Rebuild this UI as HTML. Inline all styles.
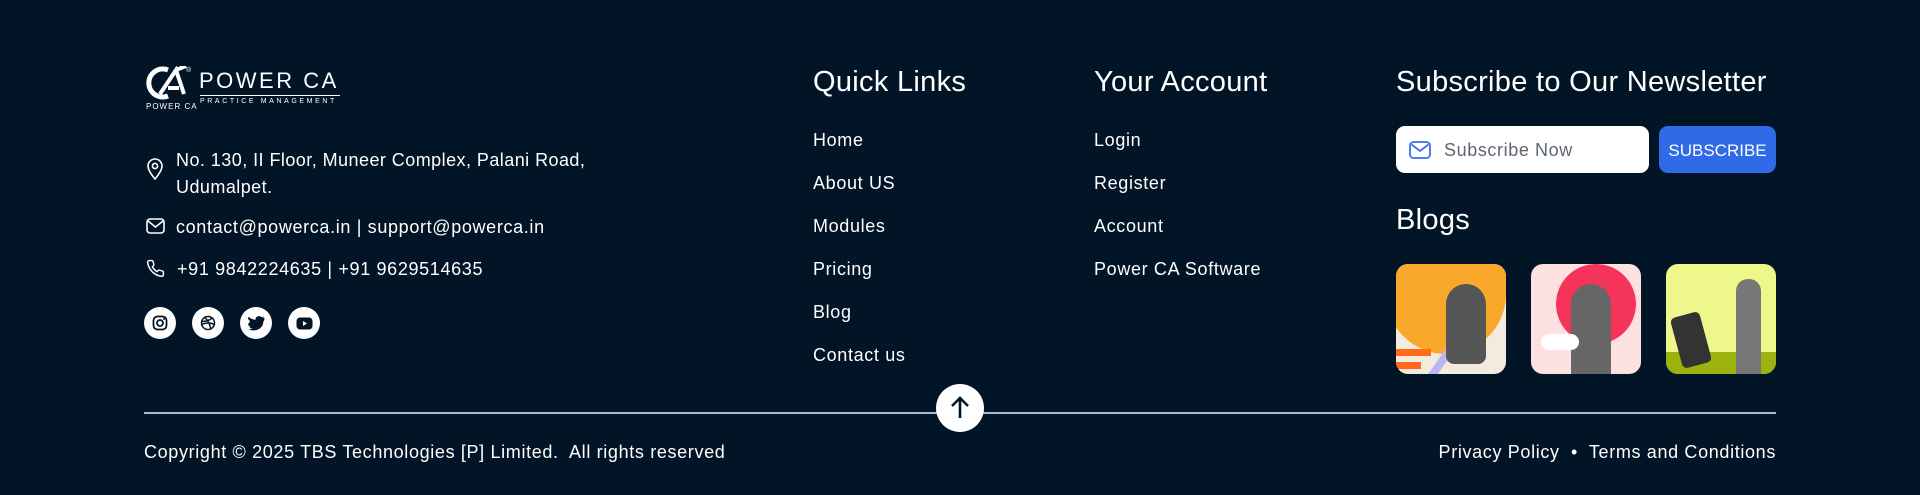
<!DOCTYPE html>
<html><head><meta charset="utf-8"><style>
*{margin:0;padding:0;box-sizing:border-box}
body{width:1920px;height:495px;background:#011526;color:#fff;font-family:"Liberation Sans",sans-serif;position:relative;overflow:hidden}
.a{position:absolute;white-space:nowrap}
.t{font-size:18px;letter-spacing:.65px}
.h{font-size:29px;letter-spacing:.3px}
.soc{position:absolute;top:307px;width:32px;height:32px;border-radius:50%;background:#fff;display:flex;align-items:center;justify-content:center}
.img{position:absolute;top:264px;width:110px;height:110px;border-radius:12px;overflow:hidden}
</style></head><body>
<div class="a" style="left:146px;top:66px;width:44px;height:36px">
<svg width="44" height="36" viewBox="0 0 44 36"><path d="M22 4 A14 14 0 1 0 22 30" stroke="#fff" stroke-width="5" fill="none"/><path d="M14 28 L30 4 L38 28 M22 22 L33 22 M30 4 L40 0" stroke="#fff" stroke-width="4" fill="none"/></svg></div>
<div class="a" style="left:186px;top:67px;font-size:7px">®</div>
<div class="a" style="left:146px;top:102px;font-size:8px;letter-spacing:1px">POWER CA</div>
<div class="a" style="left:199px;top:68px;font-size:22px;letter-spacing:2.5px">POWER CA</div>
<div style="position:absolute;left:200px;top:95px;width:140px;height:1px;background:#fff"></div>
<div class="a" style="left:200px;top:98px;font-size:7px;letter-spacing:2.6px">PRACTICE MANAGEMENT</div>
<svg class="a" style="left:146px;top:158px" width="18" height="22" viewBox="0 0 18 22"><path d="M9 21 C4 15 2 11 2 8 A7 7 0 0 1 16 8 C16 11 14 15 9 21Z" stroke="#fff" stroke-width="1.6" fill="none"/><circle cx="9" cy="8" r="2.6" stroke="#fff" stroke-width="1.6" fill="none"/></svg>
<div class="a t" style="left:176px;top:147px;line-height:27px;letter-spacing:.45px">No. 130, II Floor, Muneer Complex, Palani Road,<br>Udumalpet.</div>
<svg class="a" style="left:146px;top:218px" width="19" height="16" viewBox="0 0 19 16"><rect x="1" y="1" width="17" height="14" rx="3" stroke="#fff" stroke-width="1.6" fill="none"/><path d="M2 3 L9.5 9 L17 3" stroke="#fff" stroke-width="1.6" fill="none"/></svg>
<div class="a t" style="left:176px;top:217px">contact@powerca.in | support@powerca.in</div>
<svg class="a" style="left:146px;top:259px" width="19" height="19" viewBox="0 0 24 24"><path d="M22 16.9v3a2 2 0 0 1-2.2 2 19.8 19.8 0 0 1-8.6-3.1 19.5 19.5 0 0 1-6-6A19.8 19.8 0 0 1 2.1 4.2 2 2 0 0 1 4.1 2h3a2 2 0 0 1 2 1.7c.1 1 .4 1.9.7 2.8a2 2 0 0 1-.5 2.1L8 9.9a16 16 0 0 0 6 6l1.3-1.3a2 2 0 0 1 2.1-.4c.9.3 1.8.6 2.8.7a2 2 0 0 1 1.7 2z" stroke="#fff" stroke-width="1.8" fill="none"/></svg>
<div class="a t" style="left:177px;top:259px">+91 9842224635 | +91 9629514635</div>
<div class="soc" style="left:144px"><svg width="16" height="16" viewBox="0 0 16 16"><rect x="1.5" y="1.5" width="13" height="13" rx="4" stroke="#011526" stroke-width="1.8" fill="none"/><circle cx="8" cy="8" r="3" stroke="#011526" stroke-width="1.8" fill="none"/><circle cx="12" cy="4" r="1" fill="#011526"/></svg></div>
<div class="soc" style="left:192px"><svg width="16" height="16" viewBox="0 0 16 16" fill="none" stroke="#011526" stroke-width="1.5"><circle cx="8" cy="8" r="6.5"/><path d="M5 2.5c3 3 5 7 6 12M1.8 6.5c4 0 8-1 11-4M1.8 9.5c4-2 9-2 12.5 0"/></svg></div>
<div class="soc" style="left:240px"><svg width="17" height="15" viewBox="0 0 24 20"><path d="M23 2a10 10 0 0 1-2.9.8A5 5 0 0 0 22.4 0a10 10 0 0 1-3.1 1.2A4.9 4.9 0 0 0 10.9 5.7 14 14 0 0 1 .8.6a4.9 4.9 0 0 0 1.5 6.6A4.9 4.9 0 0 1 .1 12.6v.1a4.9 4.9 0 0 0 4 4.8 5 5 0 0 1-2.2.1 4.9 4.9 0 0 0 4.6 3.4A9.9 9.9 0 0 1 0 22.1 14 14 0 0 0 7.5 24c9.1 0 14-7.5 14-14v-.6A10 10 0 0 0 23 2z" transform="scale(1 .82)" fill="#011526"/></svg></div>
<div class="soc" style="left:288px"><svg width="17" height="13" viewBox="0 0 17 13"><rect x="0.5" y="0.5" width="16" height="12" rx="3.5" fill="#011526"/><path d="M7 4 L11 6.5 L7 9Z" fill="#fff"/></svg></div>
<div class="a h" style="left:813px;top:66px">Quick Links</div>
<div class="a t" style="left:813px;top:130px">Home</div>
<div class="a t" style="left:813px;top:173px">About US</div>
<div class="a t" style="left:813px;top:216px">Modules</div>
<div class="a t" style="left:813px;top:259px">Pricing</div>
<div class="a t" style="left:813px;top:302px">Blog</div>
<div class="a t" style="left:813px;top:345px">Contact us</div>
<div class="a h" style="left:1094px;top:66px">Your Account</div>
<div class="a t" style="left:1094px;top:130px">Login</div>
<div class="a t" style="left:1094px;top:173px">Register</div>
<div class="a t" style="left:1094px;top:216px">Account</div>
<div class="a t" style="left:1094px;top:259px">Power CA Software</div>
<div class="a h" style="left:1396px;top:66px">Subscribe to Our Newsletter</div>
<div class="a" style="left:1396px;top:126px;width:253px;height:47px;background:#fff;border-radius:9px"></div>
<svg class="a" style="left:1409px;top:141px" width="22" height="18" viewBox="0 0 22 18"><rect x="1" y="1" width="20" height="16" rx="3.5" stroke="#3a72e8" stroke-width="1.8" fill="none"/><path d="M2.5 3.5 L11 10 L19.5 3.5" stroke="#3a72e8" stroke-width="1.8" fill="none"/></svg>
<div class="a" style="left:1444px;top:140px;font-size:18px;letter-spacing:.6px;color:#5d6670">Subscribe Now</div>
<div class="a" style="left:1659px;top:126px;width:117px;height:47px;background:#2f6be6;border-radius:9px;font-size:17px;line-height:49px;text-align:center">SUBSCRIBE</div>
<div class="a h" style="left:1396px;top:204px">Blogs</div>
<div class="img" style="left:1396px;background:#f4ebe0">
<div style="position:absolute;left:-10px;top:0;width:120px;height:90px;background:#f9a82b;border-radius:0 0 60px 60px"></div>
<div style="position:absolute;left:40px;top:40px;width:8px;height:120px;background:#b9b6f3;transform:rotate(35deg)"></div>
<div style="position:absolute;left:50px;top:20px;width:40px;height:80px;background:#555;border-radius:20px 20px 8px 8px"></div>
<div style="position:absolute;left:0;top:85px;width:35px;height:7px;background:#ff6a1a"></div>
<div style="position:absolute;left:0;top:98px;width:25px;height:7px;background:#ff6a1a"></div></div>
<div class="img" style="left:1531px;background:#fde0e0">
<div style="position:absolute;left:25px;top:0;width:80px;height:80px;background:#f5345a;border-radius:50%"></div>
<div style="position:absolute;left:40px;top:20px;width:40px;height:90px;background:#666;border-radius:20px 20px 0 0"></div>
<div style="position:absolute;left:10px;top:70px;width:38px;height:16px;background:#fff;border-radius:8px"></div></div>
<div class="img" style="left:1666px;background:#eef78a">
<div style="position:absolute;left:0;top:88px;width:110px;height:22px;background:#9cb20e"></div>
<div style="position:absolute;left:10px;top:50px;width:30px;height:52px;background:#333;border-radius:5px;transform:rotate(-15deg)"></div>
<div style="position:absolute;left:70px;top:15px;width:25px;height:95px;background:#777;border-radius:12px 12px 0 0"></div></div>
<div style="position:absolute;left:144px;top:412px;width:1632px;height:2px;background:#a9b8d6"></div>
<div style="position:absolute;left:936px;top:384px;width:48px;height:48px;border-radius:50%;background:#fff"></div>
<svg class="a" style="left:950px;top:396px" width="20" height="24" viewBox="0 0 20 24"><path d="M10 22 V3 M2 10 L10 2 L18 10" stroke="#011526" stroke-width="2.6" fill="none"/></svg>
<div class="a t" style="left:144px;top:442px">Copyright © 2025 TBS Technologies [P] Limited.&nbsp; All rights reserved</div>
<div class="a t" style="right:144px;top:442px">Privacy Policy &nbsp;•&nbsp; Terms and Conditions</div>
</body></html>
